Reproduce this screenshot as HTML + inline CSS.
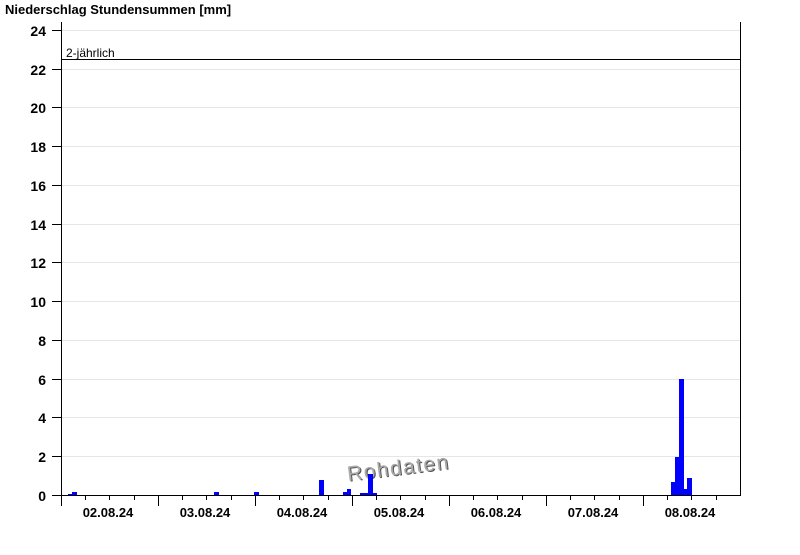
<!DOCTYPE html>
<html><head><meta charset="utf-8"><style>
body{margin:0;background:#fff;width:800px;height:550px;overflow:hidden}
</style></head><body>
<svg width="800" height="550" xmlns="http://www.w3.org/2000/svg" font-family="Liberation Sans, Arial, sans-serif">
<text x="5" y="14" font-size="13" font-weight="bold">Niederschlag Stundensummen [mm]</text>
<g stroke="#e6e6e6" stroke-width="1">
<line x1="61" x2="740" y1="30.5" y2="30.5"/><line x1="61" x2="740" y1="69.5" y2="69.5"/>
<line x1="61" x2="740" y1="107.5" y2="107.5"/><line x1="61" x2="740" y1="146.5" y2="146.5"/>
<line x1="61" x2="740" y1="185.5" y2="185.5"/><line x1="61" x2="740" y1="224.5" y2="224.5"/>
<line x1="61" x2="740" y1="262.5" y2="262.5"/><line x1="61" x2="740" y1="301.5" y2="301.5"/>
<line x1="61" x2="740" y1="340.5" y2="340.5"/><line x1="61" x2="740" y1="379.5" y2="379.5"/>
<line x1="61" x2="740" y1="417.5" y2="417.5"/><line x1="61" x2="740" y1="456.5" y2="456.5"/>
</g>
<g stroke="#000" stroke-width="1">
<line x1="61.5" y1="22" x2="61.5" y2="495"/><line x1="740.5" y1="22" x2="740.5" y2="495"/>
<line x1="61" y1="495.5" x2="741" y2="495.5"/>
<line x1="61" y1="59.5" x2="740" y2="59.5"/>
<g>
<line x1="52" x2="61" y1="30.5" y2="30.5"/><line x1="52" x2="61" y1="69.5" y2="69.5"/>
<line x1="52" x2="61" y1="107.5" y2="107.5"/><line x1="52" x2="61" y1="146.5" y2="146.5"/>
<line x1="52" x2="61" y1="185.5" y2="185.5"/><line x1="52" x2="61" y1="224.5" y2="224.5"/>
<line x1="52" x2="61" y1="262.5" y2="262.5"/><line x1="52" x2="61" y1="301.5" y2="301.5"/>
<line x1="52" x2="61" y1="340.5" y2="340.5"/><line x1="52" x2="61" y1="379.5" y2="379.5"/>
<line x1="52" x2="61" y1="417.5" y2="417.5"/><line x1="52" x2="61" y1="456.5" y2="456.5"/>
<line x1="52" x2="61" y1="495.5" y2="495.5"/>
</g>
<g>
<line x1="61.5" x2="61.5" y1="495" y2="506"/><line x1="85.5" x2="85.5" y1="495" y2="500"/><line x1="109.5" x2="109.5" y1="495" y2="500"/><line x1="134.5" x2="134.5" y1="495" y2="500"/>
<line x1="158.5" x2="158.5" y1="495" y2="506"/><line x1="182.5" x2="182.5" y1="495" y2="500"/><line x1="206.5" x2="206.5" y1="495" y2="500"/><line x1="231.5" x2="231.5" y1="495" y2="500"/>
<line x1="255.5" x2="255.5" y1="495" y2="506"/><line x1="279.5" x2="279.5" y1="495" y2="500"/><line x1="303.5" x2="303.5" y1="495" y2="500"/><line x1="328.5" x2="328.5" y1="495" y2="500"/>
<line x1="352.5" x2="352.5" y1="495" y2="506"/><line x1="376.5" x2="376.5" y1="495" y2="500"/><line x1="400.5" x2="400.5" y1="495" y2="500"/><line x1="425.5" x2="425.5" y1="495" y2="500"/>
<line x1="449.5" x2="449.5" y1="495" y2="506"/><line x1="473.5" x2="473.5" y1="495" y2="500"/><line x1="497.5" x2="497.5" y1="495" y2="500"/><line x1="522.5" x2="522.5" y1="495" y2="500"/>
<line x1="546.5" x2="546.5" y1="495" y2="506"/><line x1="570.5" x2="570.5" y1="495" y2="500"/><line x1="594.5" x2="594.5" y1="495" y2="500"/><line x1="619.5" x2="619.5" y1="495" y2="500"/>
<line x1="643.5" x2="643.5" y1="495" y2="506"/><line x1="667.5" x2="667.5" y1="495" y2="500"/><line x1="691.5" x2="691.5" y1="495" y2="500"/><line x1="716.5" x2="716.5" y1="495" y2="500"/>
</g>
</g>
<text x="66" y="57" font-size="12">2-jährlich</text>
<g font-size="14" font-weight="bold" text-anchor="end">
<text x="46" y="36">24</text><text x="46" y="75">22</text><text x="46" y="113">20</text>
<text x="46" y="152">18</text><text x="46" y="191">16</text><text x="46" y="230">14</text>
<text x="46" y="268">12</text><text x="46" y="307">10</text><text x="46" y="346">8</text>
<text x="46" y="385">6</text><text x="46" y="423">4</text><text x="46" y="462">2</text><text x="46" y="501">0</text>
</g>
<g font-size="13" font-weight="bold" text-anchor="middle">
<text x="108" y="517">02.08.24</text><text x="205" y="517">03.08.24</text><text x="302" y="517">04.08.24</text>
<text x="399" y="517">05.08.24</text><text x="496" y="517">06.08.24</text><text x="593" y="517">07.08.24</text><text x="690" y="517">08.08.24</text>
</g>
<g transform="rotate(-7 348 481)" font-size="21" letter-spacing="1.5">
<text x="349" y="482" fill="#555">Rohdaten</text>
<text x="348" y="481" fill="#aaa">Rohdaten</text>
</g>
<g fill="#0000ff">
<rect x="68" y="494" width="4" height="1"/><rect x="72" y="492" width="5" height="3"/>
<rect x="214" y="492" width="5" height="3"/><rect x="254" y="492" width="5" height="3"/>
<rect x="319" y="480" width="5" height="15"/><rect x="343" y="492" width="4" height="3"/>
<rect x="347" y="489" width="4" height="6"/><rect x="360" y="493" width="8" height="2"/>
<rect x="368" y="474" width="5" height="21"/><rect x="373" y="493" width="4" height="2"/>
<rect x="671" y="482" width="4" height="13"/><rect x="675" y="457" width="4" height="38"/>
<rect x="679" y="379" width="5" height="116"/><rect x="684" y="489" width="3" height="6"/>
<rect x="687" y="478" width="5" height="17"/>
</g>
</svg>
</body></html>
